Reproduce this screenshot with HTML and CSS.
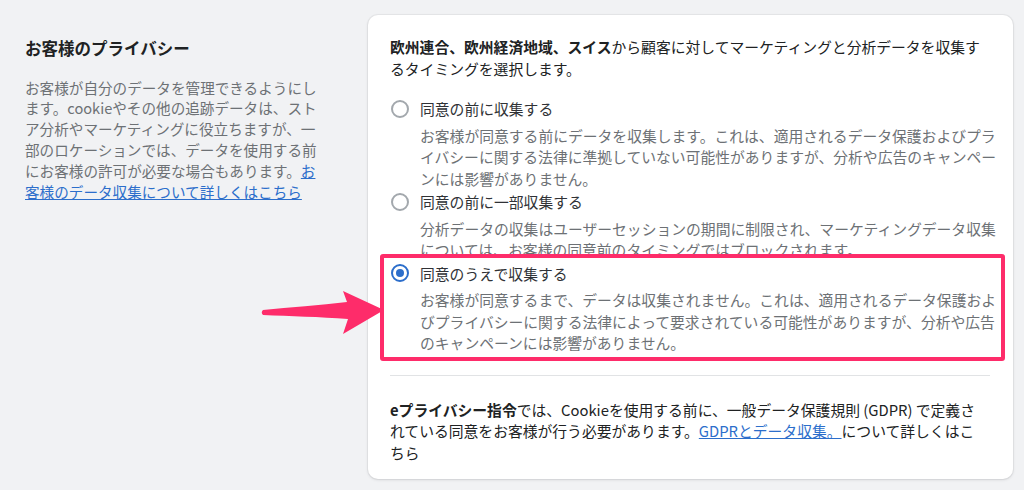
FILE: index.html
```html
<!DOCTYPE html>
<html lang="ja">
<head>
<meta charset="utf-8">
<title>お客様のプライバシー</title>
<link rel="stylesheet" href="styles.css">
</head>
<body>
<div class="page">
  <aside class="intro">
    <h2 class="intro-title">お客様のプライバシー</h2>
    <p class="intro-text">お客様が自分のデータを管理できるようにします。cookieやその他の追跡データは、ストア分析やマーケティングに役立ちますが、一部のロケーションでは、データを使用する前にお客様の許可が必要な場合もあります。<a class="link" href="#">お客様のデータ収集について詳しくはこちら</a></p>
  </aside>

  <section class="card">
    <p class="lead"><strong>欧州連合、欧州経済地域、スイス</strong>から顧客に対してマーケティングと分析データを収集するタイミングを選択します。</p>

    <div class="options">
      <div class="option">
        <div class="option-label"><span class="radio"></span>同意の前に収集する</div>
        <p class="option-desc">お客様が同意する前にデータを収集します。これは、適用されるデータ保護およびプライバシーに関する法律に準拠していない可能性がありますが、分析や広告のキャンペーンには影響がありません。</p>
      </div>
      <div class="option">
        <div class="option-label"><span class="radio"></span>同意の前に一部収集する</div>
        <p class="option-desc">分析データの収集はユーザーセッションの期間に制限され、マーケティングデータ収集については、お客様の同意前のタイミングではブロックされます。</p>
      </div>
      <div class="option">
        <div class="option-label"><span class="radio radio-checked"></span>同意のうえで収集する</div>
        <p class="option-desc">お客様が同意するまで、データは収集されません。これは、適用されるデータ保護およびプライバシーに関する法律によって要求されている可能性がありますが、分析や広告のキャンペーンには影響がありません。</p>
      </div>
    </div>

    <hr class="divider">

    <p class="note"><strong>eプライバシー指令</strong>では、Cookieを使用する前に、一般データ保護規則 (GDPR) で定義されている同意をお客様が行う必要があります。<a class="link" href="#">GDPRとデータ収集。</a>について詳しくはこちら</p>
  </section>

  <div class="highlight"></div>
  <svg class="arrow" viewBox="0 0 135 55" width="135" height="55" aria-hidden="true">
    <path d="M8,25 C35,22.5 65,20 92,17 L88,6 L129,25 L88,49 L93,34 C65,32 35,31 8,30 Q5.5,27.5 8,25 Z" fill="#fe2c6a"/>
  </svg>
</div>
</body>
</html>
```

FILE: styles.css
```css
* {
  box-sizing: border-box;
}

body {
  margin: 0;
  background: #f1f2f4;
  font-family: "Noto Sans CJK JP", "Noto Sans", sans-serif;
  color: #303236;
}

.page {
  position: relative;
  display: flex;
  align-items: flex-start;
  padding: 15px 11px 0 25px;
  width: 1024px;
  height: 490px;
  overflow: hidden;
}

.intro {
  width: 300px;
  margin-right: 43px;
  padding-top: 22px;
  flex-shrink: 0;
}

.intro-title {
  margin: 0 0 18.6px;
  font-size: 16.5px;
  line-height: 22px;
  font-weight: 700;
  color: #202223;
}

.intro-text {
  margin: 0;
  font-size: 14.6px;
  line-height: 20.8px;
  color: #6d7175;
}

.link {
  color: #2c6ecb;
  text-decoration: underline;
}

.card {
  width: 645px;
  height: 464px;
  flex-shrink: 0;
  background: #ffffff;
  border-radius: 10px;
  padding: 21px 11px 14px 22px;
  box-shadow: 0 0 0 1px rgba(63, 63, 68, 0.05), 0 1px 3px rgba(63, 63, 68, 0.15);
  font-size: 14.8px;
  line-height: 21.5px;
}

.lead {
  max-width: 600px;
  margin: 0;
  color: #202223;
}

.lead strong,
.note strong {
  font-weight: 700;
}

.options {
  display: flex;
  flex-direction: column;
  gap: 2px;
  margin-top: 19px;
}

.option-label {
  display: flex;
  align-items: center;
  gap: 11px;
  color: #303236;
}

.radio {
  display: flex;
  align-items: center;
  justify-content: center;
  width: 18px;
  height: 18px;
  margin-left: 1px;
  border: 2px solid #a3a8ad;
  border-radius: 50%;
  flex-shrink: 0;
}

.radio-checked {
  border-color: #2c6ecb;
}

.radio-checked::after {
  content: "";
  width: 8px;
  height: 8px;
  border-radius: 50%;
  background: #2c6ecb;
}

.option-desc {
  margin: 5px 0 0;
  padding-left: 30px;
  color: #6d7175;
}

.divider {
  max-width: 600px;
  margin: 21px 0 23px;
  border: 0;
  border-top: 1px solid #e1e3e5;
}

.note {
  max-width: 598px;
  margin: 0;
  color: #202223;
}

.highlight {
  position: absolute;
  left: 380px;
  top: 254px;
  width: 625px;
  height: 107px;
  border: 4px solid #fe2c6a;
  border-radius: 3px;
}

.arrow {
  position: absolute;
  left: 255px;
  top: 285px;
}
```
